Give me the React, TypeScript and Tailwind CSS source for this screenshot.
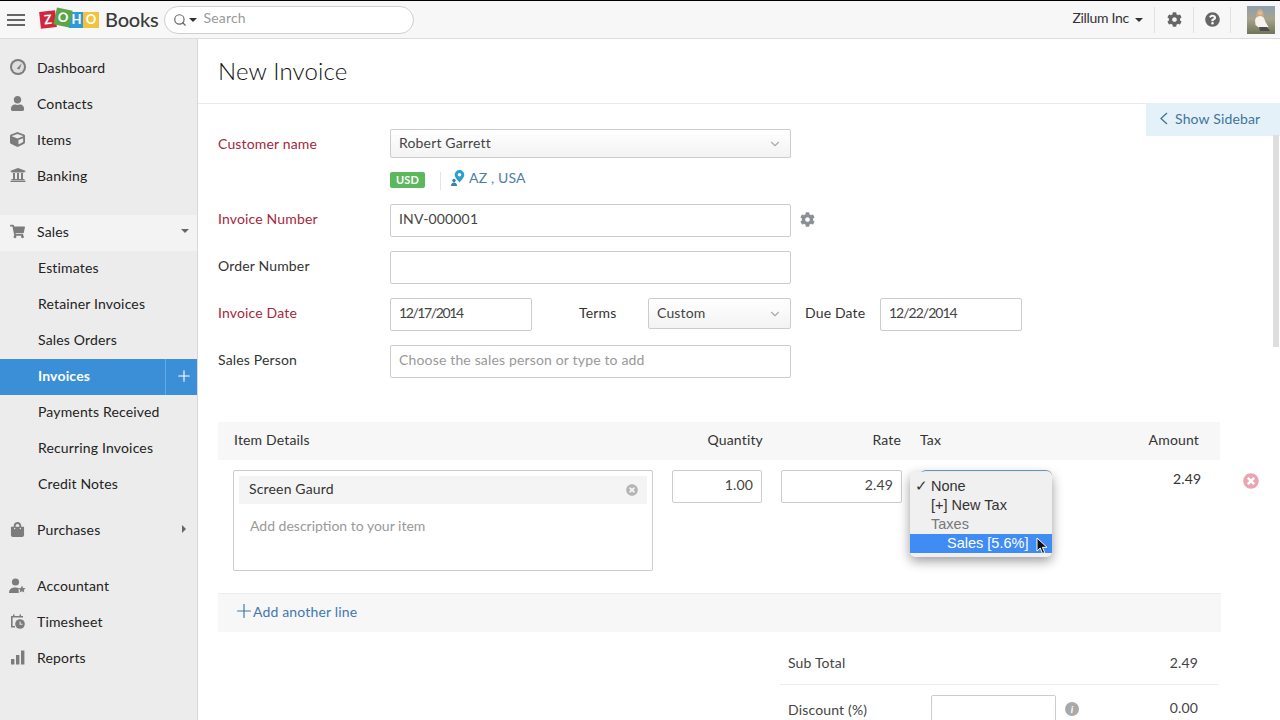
import React from 'react';
import { FaCog, FaCube, FaQuestionCircle, FaShoppingBag, FaShoppingCart, FaTimesCircle, FaUniversity, FaUser } from 'react-icons/fa';
import { ChevronDown, Plus, Search } from 'lucide-react';

const DashboardIcon = () => (
  <svg width="16" height="16" viewBox="0 0 16 16">
    <circle cx="8" cy="8" r="8" fill="#7b7c7e" />
    <circle cx="8" cy="8" r="6" fill="#dedede" />
    <path d="M6.800 9.400 11.800 4.200 9.400 10.400Z" fill="#7b7c7e" />
  </svg>
);

const AccountantIcon = () => (
  <svg width="17" height="15" viewBox="0 0 17 15" fill="#7b7c7e">
    <circle cx="6.500" cy="4" r="3.600" />
    <path d="M0 15c0-4 2.500-5.600 6.500-5.600 1.200 0 2.300.2 3.200.6V15Z" />
    <path d="M13 7.600l1.100 2.300 2.500.3-1.800 1.700.5 2.500-2.300-1.200-2.300 1.200.5-2.500-1.800-1.700 2.500-.3Z" />
  </svg>
);

const TimesheetIcon = () => (
  <svg width="15" height="15" viewBox="0 0 15 15" fill="#7b7c7e">
    <path d="M1 2h12v1.600H2.600V12H5v1.600H1Z" />
    <rect x="3" y="0.500" width="1.500" height="2.500" />
    <rect x="9.500" y="0.500" width="1.500" height="2.500" />
    <circle cx="10" cy="10" r="4.800" />
    <path d="M9.600 7.600h1v2.200h1.800v1H9.600Z" fill="#ececec" />
  </svg>
);

const ReportsIcon = () => (
  <svg width="14" height="15" viewBox="0 0 14 15" fill="#7b7c7e">
    <rect x="0" y="9" width="3.400" height="5.500" />
    <rect x="5" y="5" width="3.400" height="9.500" />
    <rect x="10" y="0.500" width="3.400" height="14" />
  </svg>
);

const PinIcon = () => (
  <svg width="14" height="16" viewBox="0 0 14 16">
    <path d="M8.500 0a4.800 4.800 0 0 0-4.800 4.800c0 3 4.800 7.600 4.800 7.600s4.800-4.600 4.800-7.600A4.800 4.800 0 0 0 8.500 0Z" fill="#2a9fd0" />
    <circle cx="8.500" cy="4.800" r="1.800" fill="#fff" />
    <circle cx="3" cy="10.500" r="1.700" fill="#3c7fa8" />
    <path d="M0 16c0-2.400 1.200-3.600 3-3.600s3 1.200 3 3.600Z" fill="#3c7fa8" />
  </svg>
);

const Avatar = () => (
  <svg width="28" height="28" viewBox="0 0 28 28" className="block">
    <defs>
      <linearGradient id="sky" x1="0" y1="0" x2="0" y2="1">
        <stop offset="0" stopColor="#8b9fb2" />
        <stop offset="0.45" stopColor="#a8a48e" />
        <stop offset="1" stopColor="#6f7658" />
      </linearGradient>
    </defs>
    <rect width="28" height="28" fill="url(#sky)" />
    <path d="M9 12c0-7 2-9 4-9s4 2 4 8l-1 3H10Z" fill="#c9a878" />
    <circle cx="13.200" cy="7" r="2.300" fill="#dcb8a0" />
    <path d="M8 14c1-3 3-4 5.500-4s4 2 5 6l3 5-5 2-4-1-4-3Z" fill="#f4f1ee" />
    <path d="M12 21h8l3 4H13Z" fill="#4b4a4c" />
  </svg>
);

const Cursor = () => (
  <svg width="12" height="18" viewBox="0 0 12 18" className="absolute left-[1036px] top-[536px]">
    <path d="M1 1v13l3.200-3 2.300 5.500 2.200-1L6.400 10.300H11Z" fill="#111" stroke="#fff" strokeWidth="1" />
  </svg>
);

const topItems = [
  { label: 'Dashboard', icon: <DashboardIcon /> },
  { label: 'Contacts', icon: <FaUser size={15} color="#7b7c7e" /> },
  { label: 'Items', icon: <FaCube size={15} color="#7b7c7e" /> },
  { label: 'Banking', icon: <FaUniversity size={16} color="#7b7c7e" /> },
];

const salesItems = ['Estimates', 'Retainer Invoices', 'Sales Orders', 'Invoices', 'Payments Received', 'Recurring Invoices', 'Credit Notes'];

const bottomItems = [
  { label: 'Accountant', icon: <AccountantIcon /> },
  { label: 'Timesheet', icon: <TimesheetIcon /> },
  { label: 'Reports', icon: <ReportsIcon /> },
];

const NavRow = ({ icon, label, children, className = '' }: { icon: React.ReactNode; label: string; children?: React.ReactNode; className?: string }) => (
  <div className={`flex h-9 items-center pb-[4px] ${className}`}>
    <div className="flex w-[37px] justify-center pr-[2px]">{icon}</div>
    <span className="text-[#222]">{label}</span>
    {children}
  </div>
);

const Sidebar = () => (
  <aside className="flex w-[198px] shrink-0 flex-col border-r border-[#d8d8d8] bg-[#ececec] pt-[12px] text-[14px]">
    {topItems.map((item) => (
      <NavRow key={item.label} icon={item.icon} label={item.label} />
    ))}
    <NavRow className="mt-5 bg-[#f3f3f3]" icon={<FaShoppingCart size={15} color="#7b7c7e" />} label="Sales">
      <span className="ml-auto mr-[8px] h-0 w-0 border-x-[4px] border-t-[4px] border-x-transparent border-t-[#666]" />
    </NavRow>
    {salesItems.map((label) =>
      label === 'Invoices' ? (
        <div key={label} className="flex h-9 items-center bg-[#3a8fd6] font-bold text-white">
          <span className="pb-[4px] pl-[38px]">{label}</span>
          <span className="ml-auto flex h-full w-[32px] items-center justify-center border-l border-[#62a8e2] pb-[2px] pl-[4px]">
            <Plus size={18} strokeWidth={1.5} />
          </span>
        </div>
      ) : (
        <div key={label} className="flex h-9 items-center pb-[4px] pl-[38px] text-[#222]">{label}</div>
      ),
    )}
    <NavRow className="mt-[10px]" icon={<FaShoppingBag size={15} color="#7b7c7e" />} label="Purchases">
      <span className="ml-auto mr-[11px] h-0 w-0 border-y-[4px] border-l-[4px] border-y-transparent border-l-[#666]" />
    </NavRow>
    <div className="mt-5">
      {bottomItems.map((item) => (
        <NavRow key={item.label} icon={item.icon} label={item.label} />
      ))}
    </div>
  </aside>
);

const Header = () => (
  <header className="flex h-[38px] shrink-0 items-center border-b border-[#dcdcdc] bg-[#f7f7f7] text-[14px]">
    <div className="ml-[7px] flex w-[18px] flex-col gap-[3px]">
      <span className="h-[2px] bg-[#666]" />
      <span className="h-[2px] bg-[#666]" />
      <span className="h-[2px] bg-[#666]" />
    </div>
    <div className="ml-[15px] flex items-center text-[13px] font-bold leading-none tracking-normal text-white">
      <span className="flex h-[17px] w-[16px] -rotate-6 items-center justify-center bg-[#d0273c]">Z</span>
      <span className="-ml-px -mt-[4px] flex h-[17px] w-[16px] rotate-12 items-center justify-center bg-[#5ba648]">O</span>
      <span className="-ml-[2px] flex h-[16px] w-[15px] items-center justify-center bg-[#2f9ad8]">H</span>
      <span className="-ml-px flex h-[16px] w-[16px] items-center justify-center bg-[#f2c33c]">O</span>
    </div>
    <span className="ml-[6px] pb-[2px] text-[20px] font-medium leading-none tracking-[-0.2px] text-[#3a3a3a]">Books</span>
    <div className="ml-[5px] flex h-[28px] w-[250px] items-center rounded-full border border-[#cfcfcf] bg-white pl-[8px]">
      <Search size={14} color="#666" />
      <span className="ml-[2px] h-0 w-0 border-x-[4px] border-t-[4px] border-x-transparent border-t-[#333]" />
      <span className="ml-[7px] pb-[4px] text-[#999]">Search</span>
    </div>
    <div className="ml-auto flex h-full items-center">
      <span className="pb-[4px] tracking-[-0.3px] text-[#333]">Zillum Inc</span>
      <span className="ml-[6px] h-0 w-0 border-x-[4px] border-t-[4px] border-x-transparent border-t-[#333]" />
      <span className="ml-[11px] h-[26px] w-px bg-[#e2e2e2]" />
      <span className="flex w-[38px] justify-center pb-[1px]"><FaCog size={15} color="#666" /></span>
      <span className="h-[26px] w-px bg-[#e2e2e2]" />
      <span className="flex w-[36px] justify-center pb-[1px]"><FaQuestionCircle size={15} color="#666" /></span>
      <span className="h-[26px] w-px bg-[#e2e2e2]" />
      <span className="ml-[16px] mr-[5px]"><Avatar /></span>
    </div>
  </header>
);

const inputCls = 'flex items-center rounded-[2px] border border-[#ccc] bg-white px-[8px] pb-[4px] text-[#444]';
const selectCls = 'flex items-center justify-between rounded-[2px] border border-[#ccc] bg-gradient-to-b from-white to-[#f3f3f3] px-[8px] pb-[3px] text-[#444]';

const FormRow = ({ label, required, className = '', labelClass = 'pb-[4px]', children }: { label: string; required?: boolean; className?: string; labelClass?: string; children: React.ReactNode }) => (
  <div className={`flex items-center ${className}`}>
    <label className={`w-[172px] shrink-0 ${labelClass} ${required ? 'text-[#a3283c]' : 'text-[#333]'}`}>{label}</label>
    {children}
  </div>
);

const InvoiceForm = () => (
  <div className="pl-5 text-[14px]">
    <FormRow label="Customer name" required labelClass="pb-[1px]" className="mt-[25px]">
      <div className={`${selectCls} h-[29px] w-[401px]`}>
        <span>Robert Garrett</span>
        <ChevronDown size={14} color="#aaa" className="mt-[3px]" />
      </div>
    </FormRow>
    <div className="ml-[172px] mt-[14px] flex h-[18px] items-center">
      <span className="mb-[2px] flex h-[16px] w-[35px] items-center justify-center rounded-[2px] bg-[#5cb85c] text-[11px] font-bold text-white">USD</span>
      <span className="ml-[15px] h-[18px] w-px bg-[#e4e4e4]" />
      <span className="ml-[10px] pb-[6px]"><PinIcon /></span>
      <span className="ml-[4px] pb-[8px] text-[#4a7fa8]">AZ , USA</span>
    </div>
    <FormRow label="Invoice Number" required className="mt-[14px]">
      <div className={`${inputCls} h-[33px] w-[401px]`}>INV-000001</div>
      <FaCog size={15} color="#8a9096" className="mb-[3px] ml-[9px]" />
    </FormRow>
    <FormRow label="Order Number" className="mt-[14px]">
      <div className={`${inputCls} h-[33px] w-[401px]`} />
    </FormRow>
    <FormRow label="Invoice Date" required className="mt-[14px]">
      <div className={`${inputCls} h-[33px] w-[142px]`}><span className="tracking-[-1.4px]">12/17/2014</span></div>
      <span className="ml-[47px] w-[69px] pb-[4px] text-[#333]">Terms</span>
      <div className={`${selectCls} h-[31px] w-[143px] self-start`}>
        <span>Custom</span>
        <ChevronDown size={14} color="#aaa" className="mt-[3px]" />
      </div>
      <span className="ml-[14px] w-[75px] pb-[4px] text-[#333]">Due Date</span>
      <div className={`${inputCls} h-[33px] w-[142px]`}><span className="tracking-[-1px]">12/22/2014</span></div>
    </FormRow>
    <FormRow label="Sales Person" className="mt-[14px]">
      <div className={`${inputCls} h-[33px] w-[401px] !text-[#999]`}>Choose the sales person or type to add</div>
    </FormRow>
  </div>
);

const ItemTable = () => (
  <div className="ml-5 mt-[44px] w-[1002px] text-[14px] text-[#333]">
    <div className="flex h-[38px] items-center bg-[#f7f7f7] pb-[4px] pl-[16px]">
      <span className="w-[434px]">Item Details</span>
      <span className="w-[95px] text-right">Quantity</span>
      <span className="w-[138px] text-right">Rate</span>
      <div className="flex w-[298px] justify-between pl-[19px]">
        <span>Tax</span>
        <span>Amount</span>
      </div>
    </div>
    <div className="mt-[10px] flex w-max items-start pl-[15px]">
      <div className="w-[420px] rounded-[2px] border border-[#ccc] p-[5px]">
        <div className="flex h-[28px] items-center justify-between bg-[#f4f4f4] pl-[10px] pr-[9px] text-[#333]">
          <span className="pb-[4px]">Screen Gaurd</span>
          <FaTimesCircle size={12} color="#b4b4b4" />
        </div>
        <div className="ml-[11px] mt-[11px] h-[50px] tracking-normal text-[#999]">Add description to your item</div>
      </div>
      <div className={`${inputCls} ml-[19px] h-[33px] w-[90px] justify-end`}>1.00</div>
      <div className={`${inputCls} ml-[19px] h-[33px] w-[121px] justify-end`}>2.49</div>
      <div className="ml-[18px] h-[20px] w-[132px] rounded-t-[6px] border-t border-[#6f9fc8]" />
      <span className="-mt-[2px] ml-[121px] w-[26px] text-right">2.49</span>
      <FaTimesCircle size={16} color="#eba4b2" className="ml-[44px] mt-[3px] shrink-0" />
    </div>
    <div className="mt-[22px] flex h-[39px] w-[1003px] items-center border-t border-[#ececec] bg-[#f7f7f7] pb-[4px] pl-[15px] text-[#3f78b0]">
      <Plus size={22} strokeWidth={1.3} />
      <span className="-ml-[2px]">Add another line</span>
    </div>
  </div>
);

const Totals = () => (
  <div className="ml-[582px] mt-[20px] w-[438px] text-[14px] text-[#444]">
    <div className="flex h-[33px] items-start justify-between border-b border-[#ececec] pl-2 pr-[20px]">
      <span>Sub Total</span>
      <span>2.49</span>
    </div>
    <div className="mt-[10px] flex items-start pl-2 pr-[20px]">
      <span className="w-[143px] pt-[4px]">Discount (%)</span>
      <div className="h-[40px] w-[125px] rounded-[2px] border border-[#ccc]" />
      <span className="ml-[9px] mt-[7px] flex h-[14px] w-[14px] items-center justify-center rounded-full bg-[#a9a9a9] text-[10px] font-bold italic text-white">i</span>
      <span className="ml-auto pt-[2px]">0.00</span>
    </div>
  </div>
);

const TaxMenu = () => (
  <div className="absolute left-[910px] top-[471px] w-[142px] rounded-[5px] bg-[#f0f0f0] pb-[4px] pt-[5px] font-['Liberation_Sans',sans-serif] text-[14.5px] leading-[19px] tracking-normal text-[#333] shadow-[0_4px_12px_rgba(0,0,0,0.4)]">
    <div className="relative pl-[21px]"><span className="absolute left-[5px]">✓</span>None</div>
    <div className="pl-[21px]">[+] New Tax</div>
    <div className="pl-[21px] text-[#777]">Taxes</div>
    <div className="bg-[#3f8cf5] pl-[37px] text-white">Sales [5.6%]</div>
  </div>
);

const App: React.FC = () => {
  return (
    <div className="relative flex h-screen w-full flex-col overflow-hidden border-t border-black bg-white font-['Lato','Open_Sans',sans-serif] tracking-[0.01em]">
      <Header />
      <div className="flex min-h-0 flex-1">
        <Sidebar />
        <main className="min-w-0 flex-1">
          <div className="flex h-[65px] items-center border-b border-[#e8e8e8] pl-5 text-[24px] font-light text-[#111]">New Invoice</div>
          <InvoiceForm />
          <ItemTable />
          <Totals />
        </main>
      </div>
      <div className="absolute right-0 top-[102px] flex h-[33px] w-[134px] items-center bg-[#e4f1f8] pb-[2px] pl-[13px] text-[14px] text-[#41749e]">
        <svg width="10" height="13" viewBox="0 0 10 13" fill="none" stroke="#41749e" strokeWidth="1.300">
          <path d="M8 1 2 6.500 8 12" />
        </svg>
        <span className="ml-[6px]">Show Sidebar</span>
      </div>
      <div className="absolute right-px top-[134px] h-[212px] w-[6px] bg-[#dedede]" />
      <TaxMenu />
      <Cursor />
    </div>
  );
};

export default App;
